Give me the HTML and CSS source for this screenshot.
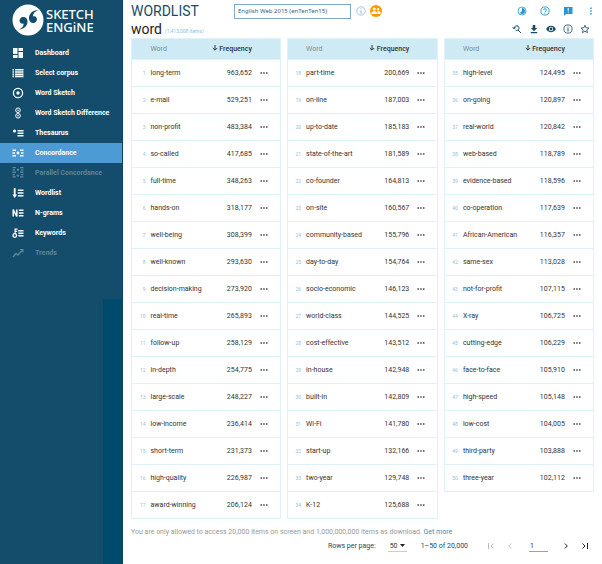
FILE: index.html
```html
<!DOCTYPE html>
<html lang="en">
<head>
<meta charset="UTF-8">
<meta name="viewport" content="width=device-width, initial-scale=1.0">
<title>Wordlist | Sketch Engine</title>
<link rel="stylesheet" href="styles.css">
</head>
<body>
<div class="app">
  <aside class="sidebar">
    <a class="logo" href="#">
      <svg viewBox="0 0 32 32" width="32" height="32">
        <circle cx="16" cy="16" r="15.5" fill="#fff"/>
        <path d="M6.500 25.500C12 25.500 15.800 21.500 15.500 17C15.200 12.800 10.500 11.800 8.300 14.500C6.300 17.300 8.500 20.500 11.700 19.500C11.500 22.500 10 24.300 6.500 25.500Z" fill="#134d6b"/>
        <path d="M26.500 6C20.500 6 16.700 10 17 14.800C17.300 19.300 22 20.300 24.200 17.500C26.200 14.700 24 11.500 20.800 12.500C21 9.500 22.800 7.300 26.500 6Z" fill="#134d6b"/>
      </svg>
      <span class="logo-text">SKETCH<br>ENGiNE</span>
    </a>
    <nav class="menu">
      <a href="#"><svg viewBox="0 0 12 12"><path d="M1 1h4.500v6H1zM6.500 1H11v3H6.500zM1 8h4.500v3H1zM6.500 5H11v6H6.500z"/></svg>Dashboard</a>
      <a href="#"><svg viewBox="0 0 12 12"><path d="M.5 2h1.500v1.600H.5zM3 2h8.500v1.600H3zM.5 4.200H2v1.600H.5zM3 4.200h8.500v1.600H3zM.5 6.400H2V8H.5zM3 6.400h8.500V8H3zM.5 8.600H2v1.600H.5zM3 8.600h8.500v1.600H3z"/></svg>Select corpus</a>
      <a href="#"><svg viewBox="0 0 12 12"><circle cx="6" cy="6" r="4.600" fill="none" stroke="currentColor" stroke-width="1.300"/><circle cx="6" cy="6" r="1.700"/></svg>Word Sketch</a>
      <a href="#"><svg viewBox="0 0 12 12"><g fill="none" stroke="currentColor"><circle cx="6" cy="3.200" r="2.300"/><circle cx="6" cy="8.800" r="2.300"/></g><circle cx="6" cy="3.200" r=".8"/><circle cx="6" cy="8.800" r=".8"/></svg>Word Sketch Difference</a>
      <a href="#"><svg viewBox="0 0 12 12"><circle cx="2.500" cy="4" r="1.600"/><path d="M5.500 3h6v1.500h-6zM5.500 5.500h6V7h-6zM5.500 8h6v1.500h-6z"/></svg>Thesaurus</a>
      <a href="#" class="active"><svg viewBox="0 0 12 12"><path d="M.5 2.500H4V4H.5zM.5 5.300H3v1.500H.5zM.5 8H4v1.500H.5zM8 2.500h3.500V4H8zM9 5.300h2.500v1.500H9zM8 8h3.500v1.500H8z"/><circle cx="6" cy="6" r="1.400"/></svg>Concordance</a>
      <a href="#" class="disabled"><svg viewBox="0 0 12 12"><path d="M.5 0H4v1.300H.5zM.5 2.300H3v1.300H.5zM.5 4.600H4v1.300H.5zM8 0h3.500v1.300H8zM9 2.300h2.500v1.300H9zM8 4.600h3.500v1.300H8zM.5 7H3v1.300H.5zM.5 9.300H4v1.300H.5zM9 7h2.500v1.300H9zM8 9.300h3.500v1.300H8z"/><circle cx="6" cy="2.800" r="1.200"/><circle cx="6" cy="8.600" r="1.200"/></svg>Parallel Concordance</a>
      <a href="#"><svg viewBox="0 0 12 12"><path d="M1.800 1h1.800v6.500H5L2.700 11 .5 7.500h1.300zM5.800 2.500h5.700V4H5.800zM5.800 5.200h5.700v1.500H5.800zM5.800 8h5.700v1.500H5.800z"/></svg>Wordlist</a>
      <a href="#"><svg viewBox="0 0 12 12"><path d="M1.200 9.500v-7l3.600 7v-7" fill="none" stroke="currentColor" stroke-width="1.500" stroke-linejoin="bevel"/><path d="M6.800 2.500h4.700V4H6.800zM6.800 5.300h4.700v1.500H6.800zM6.800 8h4.700v1.500H6.800z"/></svg>N-grams</a>
      <a href="#"><svg viewBox="0 0 12 12"><circle cx="2.800" cy="8.500" r="1.800" fill="none" stroke="currentColor" stroke-width="1.300"/><path d="M2.500 1.500h3v1.300H3.700v1h1.500V5H3.700v2H2.500zM6.300 3h5.200v1.500H6.300zM6.300 5.500h5.200V7H6.300zM6.300 8h5.200v1.500H6.300z"/></svg>Keywords</a>
      <a href="#" class="disabled"><svg viewBox="0 0 12 12"><path d="M1 10l3-3.500 2 1.500 4-4.500" fill="none" stroke="currentColor" stroke-width="1.500"/><path d="M7.500 2H11.500V6z"/></svg>Trends</a>
    </nav>
    <div class="sidebar-block"></div>
  </aside>

  <main class="content">
    <header class="topbar">
      <h1>WORDLIST</h1>
      <input class="corpus" type="text" aria-label="Corpus" value="English Web 2015 (enTenTen15)">
      <button class="icon info" aria-label="Corpus info"><svg viewBox="0 0 12 12"><circle cx="6" cy="6" r="4.200" fill="none" stroke="currentColor" stroke-width=".8"/><path d="M5.500 3.300h1v1h-1zM5.500 5.200h1v3.500h-1z"/></svg></button>
      <button class="icon shared" aria-label="Shared corpus"><svg viewBox="0 0 12 12"><circle cx="4.200" cy="4" r="1.500"/><circle cx="8" cy="4.300" r="1.200"/><path d="M1.500 9V7.700c0-2 5.400-2 5.400 0V9zM7.500 9V7.300L7 6.400c1.500-.4 3.600 0 3.600 1.300V9z"/></svg></button>
      <div class="top-icons">
        <button class="icon" aria-label="Usage"><svg viewBox="0 0 12 12"><circle cx="6" cy="6" r="4" fill="none" stroke="currentColor" stroke-width=".8"/><path d="M6 3A3 3 0 1 1 3.900 8.100L6 6z"/></svg></button>
        <button class="icon" aria-label="Help"><svg viewBox="0 0 12 12"><g fill="none" stroke="currentColor" stroke-width=".9"><circle cx="6" cy="6" r="4.100"/><path d="M4.600 5c0-1.800 2.800-1.800 2.800 0 0 1-1.400 1-1.400 2.200"/></g><path d="M5.500 7.800h1v1h-1z"/></svg></button>
        <button class="icon" aria-label="Feedback"><svg viewBox="0 0 12 12"><path fill-rule="evenodd" d="M2 2h8.500v7H4L2 10.800zM5.700 3v2.700h1V3zM5.700 6.600v1h1v-1z"/></svg></button>
        <button class="icon more" aria-label="More"><svg viewBox="0 0 12 12"><path d="M5.200 2.500h1.500V4H5.200zM5.200 5.300h1.500v1.500H5.200zM5.200 8.100h1.500v1.500H5.200z"/></svg></button>
      </div>
    </header>

    <div class="subbar">
      <h2>word</h2>
      <span class="count">(1,413,008 items)</span>
      <div class="tools">
        <button class="icon" aria-label="Change criteria"><svg viewBox="0 0 12 12"><path d="M3 5.500C3 2 8 2 8 5 8 7.800 5 7.600 4.300 6.900M7 7l3 3M1.500 4.300L3 5.900l1.500-1.600" fill="none" stroke="currentColor"/></svg></button>
        <button class="icon" aria-label="Download"><svg viewBox="0 0 12 12"><path d="M4.700 2h2.600v3h1.900L6 8.200 2.800 5h1.900zM2.800 9h6.400v1.200H2.800z"/></svg></button>
        <button class="icon" aria-label="View options"><svg viewBox="0 0 12 12"><path fill-rule="evenodd" d="M1.200 6C3 1.800 9 1.800 10.800 6 9 10.200 3 10.200 1.200 6zM6 3.800a2.200 2.200 0 1 0 0 4.400 2.200 2.200 0 0 0 0-4.400z"/><circle cx="6" cy="6" r="1.400"/></svg></button>
        <button class="icon" aria-label="Result info"><svg viewBox="0 0 12 12"><circle cx="6" cy="6" r="4.100" fill="none" stroke="currentColor" stroke-width=".8"/><path d="M5.500 3.500h1v1h-1zM5.500 5.300h1v3.200h-1z"/></svg></button>
        <button class="icon" aria-label="Favourite"><svg viewBox="0 0 12 12"><path d="M6 2.200l1.100 2.600 2.900.2-2.200 1.900.7 2.800L6 8.200 3.500 9.700l.7-2.800L2 5l2.900-.2z" fill="none" stroke="currentColor" stroke-width=".8"/></svg></button>
      </div>
    </div>

    <div class="lists" id="lists"></div>

    <p class="limit">You are only allowed to access 20,000 items on screen and 1,000,000,000 items as download. <a href="#">Get more</a></p>

    <footer class="pager">
      <label for="perPage">Rows per page:</label>
      <span class="select-wrap">
        <select id="perPage"><option>50</option><option>100</option></select>
        <svg viewBox="0 0 6 4"><path d="M0 0h6L3 3.500z"/></svg>
      </span>
      <span class="range">1–50 of 20,000</span>
      <button class="icon off" aria-label="First page"><svg viewBox="0 0 12 12"><path d="M3.500 3v6M8.500 3.500L6 6l2.500 2.500"/></svg></button>
      <button class="icon off" aria-label="Previous page"><svg viewBox="0 0 12 12"><path d="M7.200 3.500L4.700 6l2.500 2.500"/></svg></button>
      <input class="page" type="text" aria-label="Page" value="1">
      <button class="icon" aria-label="Next page"><svg viewBox="0 0 12 12"><path d="M4.800 3.500L7.300 6 4.800 8.500"/></svg></button>
      <button class="icon" aria-label="Last page"><svg viewBox="0 0 12 12"><path d="M3.500 3.500L6 6 3.500 8.500M8.500 3v6"/></svg></button>
    </footer>
  </main>
</div>
<script src="script.js"></script>
</body>
</html>
```

FILE: styles.css
```css
* {
  box-sizing: border-box;
}
body {
  margin: 0;
  font-family: Roboto, Arial, sans-serif;
  font-size: 7px;
  color: #333;
  background-color: #fff;
}
h1, h2, p {
  margin: 0;
}
a {
  text-decoration: none;
}
svg {
  display: block;
  fill: currentColor;
}
.app {
  display: flex;
  min-height: 100vh;
}

/* sidebar */
.sidebar {
  display: flex;
  flex-direction: column;
  flex: 0 0 123px;
  background-color: #134d6b;
  border-right: 1px solid #0b4361;
}
.logo {
  display: flex;
  align-items: center;
  gap: 2px;
  height: 43px;
  padding: 0 0 4px 12px;
  color: #fff;
}
.logo-text {
  padding-top: 2px;
  font-family: "Noto Sans", sans-serif;
  font-size: 13px;
  font-weight: 500;
  line-height: 13px;
}
.menu a {
  display: flex;
  align-items: center;
  gap: 11px;
  height: 20px;
  padding-left: 12px;
  color: #fff;
  font-weight: bold;
}
.menu svg {
  width: 12px;
  height: 12px;
}
.menu .active {
  background-color: #4c9bd5;
}
.menu .disabled {
  color: #5d8599;
}
.sidebar-block {
  flex: 1;
  width: 19px;
  margin-top: 36px;
  margin-left: auto;
  background-color: #004b6b;
}

/* header */
.content {
  flex: 1;
  min-width: 0;
  padding: 2px 8px 0;
}
.topbar, .subbar, .tools, .top-icons, .pager {
  display: flex;
  align-items: center;
}
.topbar {
  height: 18px;
}
h1, h2 {
  font-size: 14px;
  font-weight: 400;
  line-height: 18px;
}
h1 {
  width: 103px;
  color: #134d6b;
}
h2 {
  color: #222;
}
.corpus {
  width: 117px;
  height: 15px;
  padding: 0 3px;
  border: 1px solid #7fa9c9;
  color: #35607c;
  font-family: "Noto Sans", sans-serif;
  font-size: 6px;
}
.icon {
  width: 12px;
  height: 12px;
  padding: 0;
  border: none;
  background: none;
  color: #134d6b;
  cursor: pointer;
}
.info {
  margin-left: 4px;
  color: #8bbcdc;
}
.shared {
  margin-left: 3px;
  border-radius: 50%;
  background-color: #f90;
  color: #fff;
}
.top-icons {
  gap: 11px;
  margin-left: auto;
}
.top-icons .icon {
  color: #2496d2;
}
.top-icons .more {
  margin-right: -3px;
}
.subbar {
  height: 18px;
}
.count {
  padding: 4px 0 0 3px;
  color: #8fbfdd;
  font-size: 5px;
}
.tools {
  gap: 5px;
  margin-left: auto;
  margin-right: 3px;
}

/* word tables */
.lists {
  display: flex;
  align-items: flex-start;
  gap: 6px;
}
.list {
  flex: 1;
  table-layout: fixed;
  border-collapse: collapse;
  border: 1px solid #dff1f9;
}
.list th, .list td {
  padding: 0;
  font-weight: 400;
  text-align: left;
  white-space: nowrap;
}
.list th {
  height: 21px;
  background-color: #ceeaf4;
  color: #7b8d96;
}
.list td {
  height: 27px;
  border-top: 1px solid #dff1f9;
}
.list .num {
  width: 19px;
  padding-right: 5px;
  color: #8fbfdd;
  font-size: 5px;
  text-align: right;
}
.list .freq {
  width: 48px;
  text-align: right;
}
.list th.freq {
  color: #333;
  font-weight: 500;
}
.freq svg {
  display: inline-block;
  width: 6px;
  height: 6px;
}
.list .dots {
  width: 29px;
  padding-left: 8px;
}
.dots button {
  display: block;
  width: 8px;
  height: 8px;
  padding: 0;
  border: none;
  background: none;
  color: #444;
}

/* footer */
.limit {
  padding-top: 8px;
  color: #999;
  line-height: 10px;
}
.limit a {
  color: #2496d2;
}
.pager {
  justify-content: flex-end;
  height: 18px;
  color: #134d6b;
}
.select-wrap {
  display: grid;
  align-items: center;
  margin: 0 14px 0 12px;
  border-bottom: 1px solid #ccc;
}
.pager select {
  grid-area: 1 / 1;
  width: 19px;
  height: 11px;
  padding: 0 0 0 2px;
  border: none;
  appearance: none;
  background: none;
  color: #333;
  font-family: inherit;
  font-size: 7px;
}
.select-wrap svg {
  grid-area: 1 / 1;
  justify-self: end;
  width: 5px;
  margin-right: 2px;
  color: #222;
  pointer-events: none;
}
.range {
  margin-right: 17px;
}
.pager .icon {
  margin-right: 7px;
  color: #222;
}
.pager .icon:last-child {
  margin-right: 3px;
}
.pager .off {
  color: #bbb;
}
.pager .icon svg {
  fill: none;
  stroke: currentColor;
}
.page {
  width: 19px;
  height: 11px;
  margin: 0 12px 0 6px;
  padding: 0 1px;
  border: none;
  border-bottom: 1px solid #7fa9c9;
  color: #333;
  font-family: inherit;
  font-size: 7px;
}
```

FILE: script.js
```js
var words = [
  ["long-term", "963,652"], ["e-mail", "529,251"], ["non-profit", "483,384"],
  ["so-called", "417,685"], ["full-time", "348,263"], ["hands-on", "318,177"],
  ["well-being", "308,399"], ["well-known", "293,630"], ["decision-making", "273,920"],
  ["real-time", "265,893"], ["follow-up", "258,129"], ["in-depth", "254,775"],
  ["large-scale", "248,227"], ["low-income", "236,414"], ["short-term", "231,373"],
  ["high-quality", "226,987"], ["award-winning", "206,124"], ["part-time", "200,669"],
  ["on-line", "187,003"], ["up-to-date", "185,183"], ["state-of-the-art", "181,589"],
  ["co-founder", "164,813"], ["on-site", "160,567"], ["community-based", "155,796"],
  ["day-to-day", "154,764"], ["socio-economic", "146,123"], ["world-class", "144,525"],
  ["cost-effective", "143,512"], ["in-house", "142,948"], ["built-in", "142,809"],
  ["Wi-Fi", "141,780"], ["start-up", "132,166"], ["two-year", "129,748"],
  ["K-12", "125,688"], ["high-level", "124,495"], ["on-going", "120,897"],
  ["real-world", "120,842"], ["web-based", "118,789"], ["evidence-based", "118,596"],
  ["co-operation", "117,639"], ["African-American", "116,357"], ["same-sex", "113,028"],
  ["not-for-profit", "107,115"], ["X-ray", "106,725"], ["cutting-edge", "106,229"],
  ["face-to-face", "105,910"], ["high-speed", "105,148"], ["low-cost", "104,005"],
  ["third-party", "103,888"], ["three-year", "102,112"]
];

var perColumn = 17;
var arrow = '<svg viewBox="0 0 6 6"><path d="M3 0v5M.8 3L3 5.200 5.200 3" fill="none" stroke="currentColor"/></svg>';
var dots = '<svg viewBox="0 0 8 8"><path d="M.5 3.200H2v1.500H.5zM3.200 3.200h1.500v1.500H3.200zM6 3.200h1.500v1.500H6z"/></svg>';
var html = "";

for (var start = 0; start < words.length; start += perColumn) {
  html += '<table class="list"><thead><tr><th class="num"></th><th>Word</th><th class="freq">' + arrow + ' Frequency</th><th class="dots"></th></tr></thead><tbody>';
  for (var i = start; i < Math.min(start + perColumn, words.length); i++) {
    html += '<tr><td class="num">' + (i + 1) + '</td><td>' + words[i][0] + '</td><td class="freq">' + words[i][1] +
      '</td><td class="dots"><button aria-label="Actions">' + dots + '</button></td></tr>';
  }
  html += "</tbody></table>";
}

document.getElementById("lists").innerHTML = html;
```
